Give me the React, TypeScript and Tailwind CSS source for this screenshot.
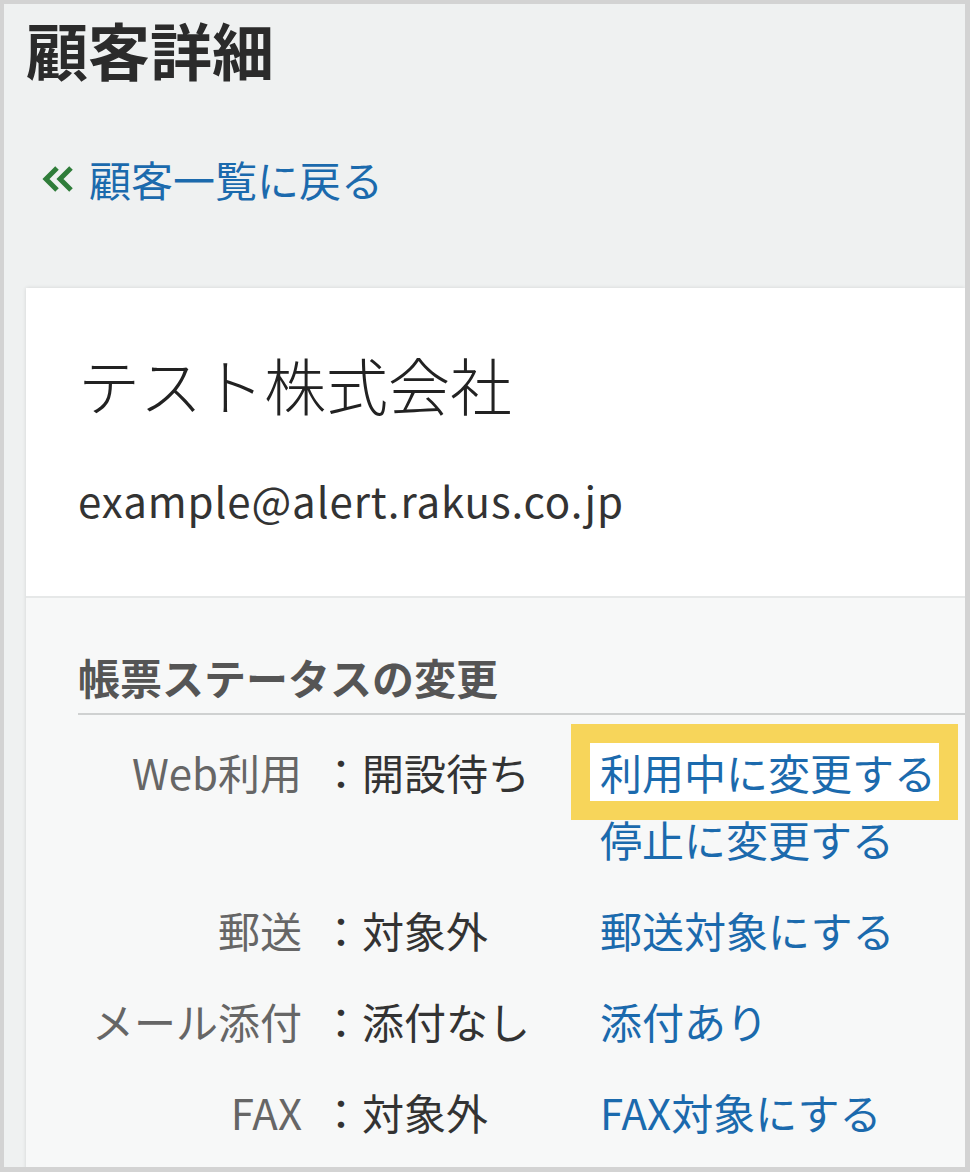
const font = { fontFamily: '"Noto Sans CJK JP", "Noto Sans", sans-serif' }

const rows = [
  { label: 'Web利用', value: '：開設待ち', links: ['利用中に変更する', '停止に変更する'] },
  { label: '郵送', value: '：対象外', links: ['郵送対象にする'] },
  { label: 'メール添付', value: '：添付なし', links: ['添付あり'] },
  { label: 'FAX', value: '：対象外', links: ['FAX対象にする'] },
]

const App = () => {
  return (
    <div
      className="w-[970px] h-[1172px] overflow-hidden bg-[#eff1f1] border-t-4 border-l-4 border-r-[5px] border-b-[5px] border-[#d3d3d3]"
      style={font}
    >
      <h1 className="pt-[14px] pl-[22px] text-[62px] leading-none font-bold text-[#2b2b2b]">顧客詳細</h1>

      <a href="#" className="mt-[78px] ml-[38px] flex items-center gap-[15px] text-[42px] leading-none text-[#1b6aad]">
        <svg width="32" height="26" viewBox="0 0 32 26" fill="none" stroke="#2f7d3a" strokeWidth="5" strokeLinejoin="miter">
          <path d="M15 2 L4 13 L15 24" />
          <path d="M29 2 L18 13 L29 24" />
        </svg>
        <span>顧客一覧に戻る</span>
      </a>

      <div className="mt-[88px] ml-[22px] bg-white shadow-[0_0_4px_rgba(0,0,0,0.12)]">
        <div className="pt-[65px] pb-[75px] pl-[52px]">
          <div className="text-[62px] leading-none font-light text-[#222]">テスト株式会社</div>
          <div className="mt-[64px] text-[42px] leading-none tracking-[0.9px] text-[#333]">example@alert.rakus.co.jp</div>
        </div>

        <div className="border-t-2 border-[#e6e8e8] bg-[#f7f8f8] pt-[58px] pl-[52px] pb-[40px]">
          <div className="pb-[15px] border-b-2 border-[#cfd1d1] text-[42px] leading-none font-bold text-[#555]">
            帳票ステータスの変更
          </div>
          <div className="mt-[23px] flex flex-col gap-[24px] text-[42px] leading-[67px]">
            {rows.map((r) => (
              <div key={r.label} className="flex">
                <div className="w-[224px] text-right text-[#666]">{r.label}</div>
                <div className="ml-[18px] w-[280px] text-[#333]">{r.value}</div>
                <div className="flex flex-col items-start">
                  {r.links.map((l, i) => (
                    <a
                      key={l}
                      href="#"
                      className={
                        i === 0 && r.label === 'Web利用'
                          ? 'relative -ml-[10px] pl-[10px] pr-[3px] leading-[58px] my-[4.5px] bg-white text-[#1b6aad] outline-[19px] outline-solid outline-[#f7d55a]'
                          : 'text-[#1b6aad]'
                      }
                    >
                      {l}
                    </a>
                  ))}
                </div>
              </div>
            ))}
          </div>
        </div>
      </div>
    </div>
  )
}

export default App
